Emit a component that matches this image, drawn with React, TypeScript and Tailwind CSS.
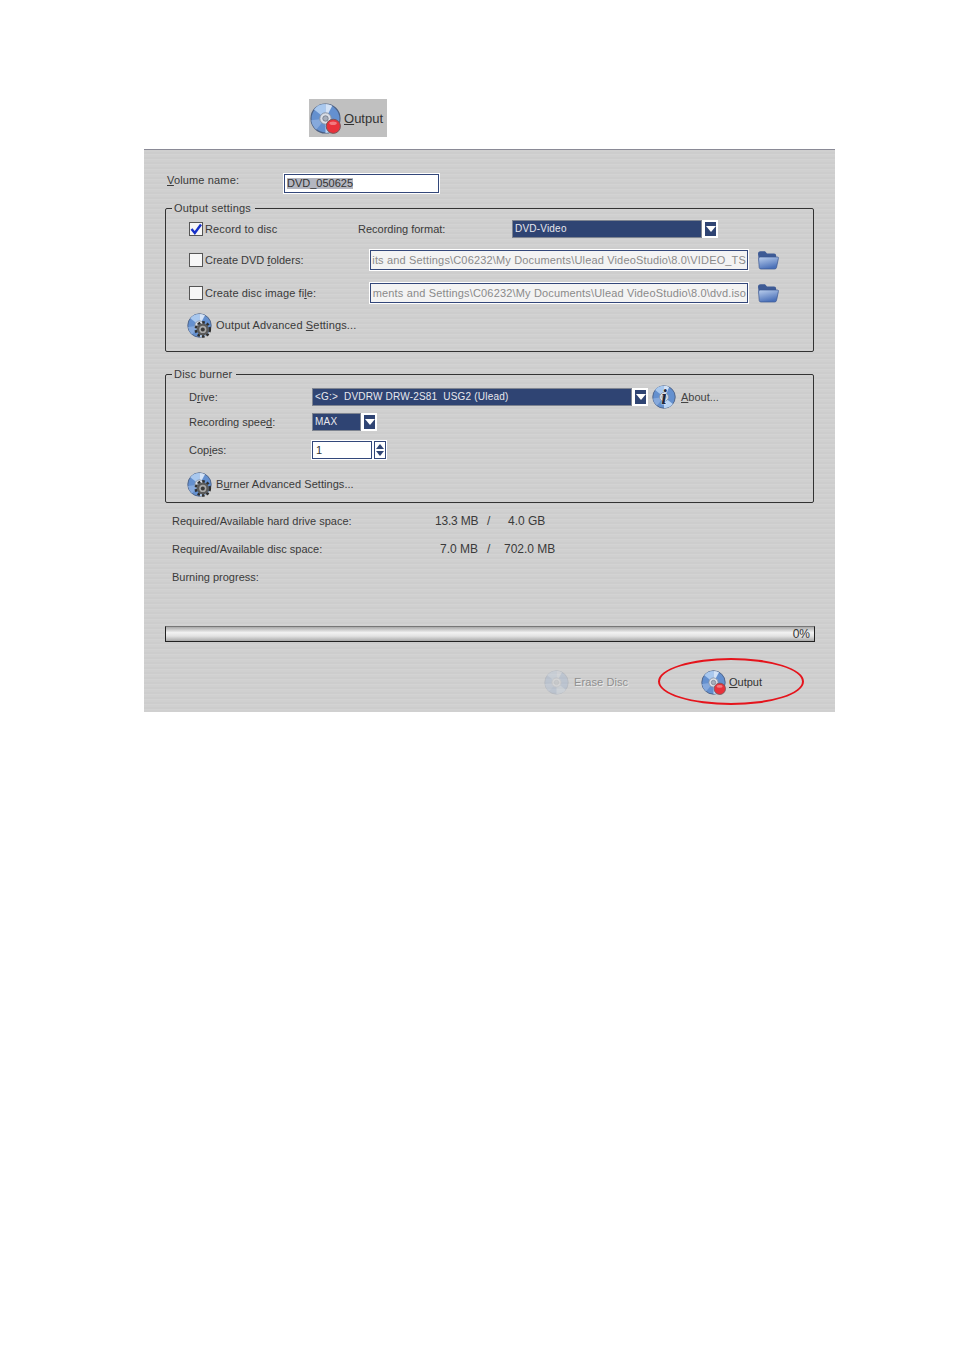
import React from "react";

const font = { fontFamily: '"Liberation Sans", Arial, sans-serif' };

function DiscFace() {
  return (
    <>
      <circle cx="12.5" cy="12.5" r="11.7" fill="#6490cf" stroke="#4b5f82" strokeWidth="0.9" />
      <path d="M12.5 12.5 L3.2 5.2 A11.7 11.7 0 0 1 12.5 0.9 Z" fill="#a9c8ee" />
      <path d="M12.5 12.5 L12.5 0.9 A11.7 11.7 0 0 1 18 2.2 Z" fill="#d3e2f6" />
      <path d="M12.5 12.5 L21.8 19.8 A11.7 11.7 0 0 1 12.5 24.1 Z" fill="#b9d3f2" />
      <path d="M12.5 12.5 L1 14 A11.7 11.7 0 0 0 5 21.5 Z" fill="#86a9dc" />
      <circle cx="12.5" cy="12.5" r="4.6" fill="#d9dee6" stroke="#8791a1" strokeWidth="0.8" />
      <circle cx="12.5" cy="12.5" r="2.2" fill="#a6aebb" stroke="#6a7382" strokeWidth="0.6" />
    </>
  );
}

function Disc({ kind, size = 25 }: { kind: "red" | "gear" | "faded"; size?: number }) {
  const faded = kind === "faded";
  return (
    <svg width={size} height={size} viewBox="0 0 25 25" className="shrink-0" style={{ opacity: faded ? 0.18 : 1 }}>
      <DiscFace />
      {kind === "red" && (
        <>
          <circle cx="18.8" cy="18.8" r="5.7" fill="#e8323b" stroke="#74585a" strokeWidth="0.8" />
          <ellipse cx="18.6" cy="16.4" rx="3" ry="1.4" fill="#f27a7f" />
        </>
      )}
      {kind === "gear" && (
        <g transform="translate(15.8 16.4)">
          <circle r="7" fill="none" stroke="#2f2f2f" strokeWidth="2.6" strokeDasharray="2.6 2" />
          <circle r="6" fill="#5b5b5b" />
          <circle r="3.6" fill="#a8a8a8" />
          <circle r="2" fill="#3a3a3a" />
        </g>
      )}
    </svg>
  );
}

function InfoIcon() {
  return (
    <svg width="24" height="24" viewBox="0 0 25 25" className="shrink-0">
      <DiscFace />
      <text x="12.5" y="20" textAnchor="middle" fontSize="21" fontWeight="700" fontStyle="italic" fill="#22283a" stroke="#ffffff" strokeWidth="0.7" paintOrder="stroke" fontFamily="Liberation Serif, serif">
        i
      </text>
    </svg>
  );
}

function Folder() {
  return (
    <svg width="22" height="20" viewBox="0 0 22 20" className="shrink-0">
      <defs>
        <linearGradient id="folder-g" x1="0" y1="0" x2="0.4" y2="1">
          <stop offset="0" stopColor="#bcd0ee" />
          <stop offset="1" stopColor="#4a70b8" />
        </linearGradient>
      </defs>
      <path d="M1 4 Q1 1.2 3.5 1.2 H8 L10 3.6 H17 Q19.2 3.6 19.2 6 V8 H2.5 L2 12 Z" fill="#3d5a95" />
      <path d="M3 7 H20.5 Q21.8 7 21.4 8.5 L19.5 17.5 Q19.2 19 17.5 19 H4 Q2.4 19 2.2 17.5 L1.6 9 Q1.6 7 3 7 Z" fill="url(#folder-g)" stroke="#3a5690" strokeWidth="0.7" />
    </svg>
  );
}

function Arrow() {
  return (
    <svg width="10" height="6" viewBox="0 0 10 6">
      <path d="M0 0 H10 L5 6 Z" fill="#fff" />
    </svg>
  );
}

function Select({ value, width }: { value: string; width: string }) {
  return (
    <div className={`flex h-[18px] items-stretch bg-white ${width}`}>
      <div className="flex flex-1 items-center overflow-hidden whitespace-pre border border-[#7f8591] bg-[#2f4473] pl-[2px] text-[10px] tracking-[0.2px] text-[#e8e8ee]">
        {value}
      </div>
      <div className="ml-[1px] flex w-[15px] items-center justify-center border-2 border-white bg-[#2f4473]">
        <Arrow />
      </div>
    </div>
  );
}

function Check({ on }: { on?: boolean }) {
  return (
    <span className="mr-[2px] flex h-[14px] w-[14px] shrink-0 items-center justify-center border border-[#555] bg-[#f6f6f6]">
      {on && (
        <svg width="12" height="12" viewBox="0 0 12 12">
          <path d="M1.5 6 L4.8 10 L11 1.5" fill="none" stroke="#1730c8" strokeWidth="2.4" />
        </svg>
      )}
    </span>
  );
}

function PathInput({ value }: { value: string }) {
  return (
    <div className="flex h-[20px] w-[378px] items-center justify-end overflow-hidden whitespace-nowrap border border-[#33477a] bg-[#f3f3f3] pr-[1px] text-[11px] tracking-[0.16px] text-[#8a8a8a] outline outline-1 outline-white">
      {value}
    </div>
  );
}

export default function App() {
  return (
    <div className="min-h-[1350px] w-[954px] bg-white text-[11px] leading-none text-[#3a3a3a]" style={font}>
      <div className="pl-[309px] pt-[99px]">
        <div className="flex h-[38px] w-[78px] items-center bg-[#c0c0c0] pl-[1px] text-[13px] text-[#333]">
          <Disc kind="red" size={31} />
          <span className="ml-[3px]">
            <u>O</u>utput
          </span>
        </div>
      </div>

      <div className="relative ml-[144px] mt-[12px] h-[563px] w-[691px] border-t border-[#8a8a96] bg-[#d0d0d0] bg-[repeating-linear-gradient(0deg,#d0d0d0_0px,#d0d0d0_2px,#d3d3d3_2px,#d3d3d3_3px,#cdcdcd_3px,#cdcdcd_5px)] pt-[24px]">
        <div className="flex h-[19px] items-center pl-[23px]">
          <span className="-mt-[6px] w-[117px] tracking-[0.15px]">
            <u>V</u>olume name:
          </span>
          <div className="flex h-[19px] w-[155px] items-center border border-[#33477a] bg-white pl-[2px] text-[11px] text-[#333] outline outline-1 outline-white">
            <span className="bg-[#b4b6c0]">DVD_050625</span>
          </div>
        </div>

        <fieldset className="ml-[21px] mt-[8px] h-[151px] w-[649px] rounded-[2px] border border-[#333] pl-[23px]">
          <legend className="-ml-[17px] h-[14px] pl-[2px] pr-[4px] leading-[14px] tracking-[0.2px]">Output settings</legend>
          <div className="flex h-[28px] items-center">
            <div className="flex w-[169px] items-center tracking-[0.15px]">
              <Check on />
              Record to disc
            </div>
            <span className="w-[154px]">Recording format:</span>
            <Select value="DVD-Video" width="w-[206px]" />
          </div>
          <div className="flex h-[34px] items-center">
            <div className="flex w-[181px] items-center">
              <Check />
              <span>
                Create DVD <u>f</u>olders:
              </span>
            </div>
            <PathInput value="its and Settings\C06232\My Documents\Ulead VideoStudio\8.0\VIDEO_TS" />
            <span className="ml-[9px]">
              <Folder />
            </span>
          </div>
          <div className="flex h-[32px] items-center">
            <div className="flex w-[181px] items-center">
              <Check />
              <span className="tracking-[0.1px]">
                Create disc image fi<u>l</u>e:
              </span>
            </div>
            <PathInput value="ments and Settings\C06232\My Documents\Ulead VideoStudio\8.0\dvd.iso" />
            <span className="ml-[9px]">
              <Folder />
            </span>
          </div>
          <div className="-ml-[2px] flex h-[32px] items-center">
            <Disc kind="gear" />
            <span className="ml-[4px] tracking-[0.15px]">
              Output Advanced <u>S</u>ettings...
            </span>
          </div>
        </fieldset>

        <fieldset className="ml-[21px] mt-[15px] h-[136px] w-[649px] rounded-[2px] border border-[#333] pl-[23px]">
          <legend className="-ml-[17px] h-[14px] pl-[2px] pr-[4px] leading-[14px] tracking-[0.2px]">Disc burner</legend>
          <div className="flex h-[29px] items-center pt-[3px]">
            <span className="w-[123px]">
              D<u>r</u>ive:
            </span>
            <Select value="<G:>  DVDRW DRW-2S81  USG2 (Ulead)" width="w-[336px]" />
            <span className="ml-[4px]">
              <InfoIcon />
            </span>
            <span className="ml-[5px] text-[#444]">
              <u>A</u>bout...
            </span>
          </div>
          <div className="flex h-[24px] items-center">
            <span className="w-[123px]">
              Recording spee<u>d</u>:
            </span>
            <Select value="MAX" width="w-[65px]" />
          </div>
          <div className="flex h-[32px] items-center">
            <span className="w-[123px]">
              Cop<u>i</u>es:
            </span>
            <div className="flex h-[18px] w-[60px] items-center border border-[#33477a] bg-white pl-[3px] text-[#333] outline outline-1 outline-white">
              1
            </div>
            <div className="ml-[2px] flex h-[18px] w-[12px] flex-col items-center justify-center gap-[2px] border border-[#33477a] bg-white outline outline-1 outline-white">
              <svg width="8" height="5" viewBox="0 0 8 5">
                <path d="M0 5 H8 L4 0 Z" fill="#2f4473" />
              </svg>
              <svg width="8" height="5" viewBox="0 0 8 5">
                <path d="M0 0 H8 L4 5 Z" fill="#2f4473" />
              </svg>
            </div>
          </div>
          <div className="-ml-[2px] flex h-[36px] items-center">
            <Disc kind="gear" />
            <span className="ml-[4px] tracking-[0.05px]">
              B<u>u</u>rner Advanced Settings...
            </span>
          </div>
        </fieldset>

        <div className="mt-[4px] pl-[28px]">
          <div className="flex h-[28px] items-center">
            <span className="w-[263px]">Required/Available hard drive space:</span>
            <span className="w-[52px] whitespace-nowrap text-[12px] tracking-[-0.2px]">13.3 MB</span>
            <span className="w-[21px] text-[12px]">/</span>
            <span className="text-[12px]">4.0 GB</span>
          </div>
          <div className="flex h-[28px] items-center">
            <span className="w-[268px]">Required/Available disc space:</span>
            <span className="w-[47px] whitespace-nowrap text-[12px]">7.0 MB</span>
            <span className="w-[17px] text-[12px]">/</span>
            <span className="whitespace-nowrap text-[12px]">702.0 MB</span>
          </div>
          <div className="flex h-[28px] items-center">Burning progress:</div>
        </div>

        <div className="ml-[21px] mt-[35px] flex h-[16px] w-[650px] items-center justify-end border border-[#222] border-t-[#777] bg-[linear-gradient(180deg,#a8a8a8_0%,#f2f2f2_40%,#e2e2e2_65%,#a9a9a9_100%)] pr-[4px] text-[12px] text-[#333]">
          0%
        </div>

        <div className="mt-[26px] flex h-[28px] items-center pl-[400px]">
          <Disc kind="faded" />
          <span className="ml-[5px] w-[127px] tracking-[0.1px] text-[#8f8f8f] [text-shadow:1px_1px_0_#e8e8e8]">Erase Disc</span>
          <Disc kind="red" />
          <span className="ml-[3px] text-[#333]">
            <u>O</u>utput
          </span>
        </div>

        <div className="absolute left-[514px] top-[508px] h-[47px] w-[146px] rounded-[50%] border-2 border-[#e5141c]" />
      </div>
    </div>
  );
}
